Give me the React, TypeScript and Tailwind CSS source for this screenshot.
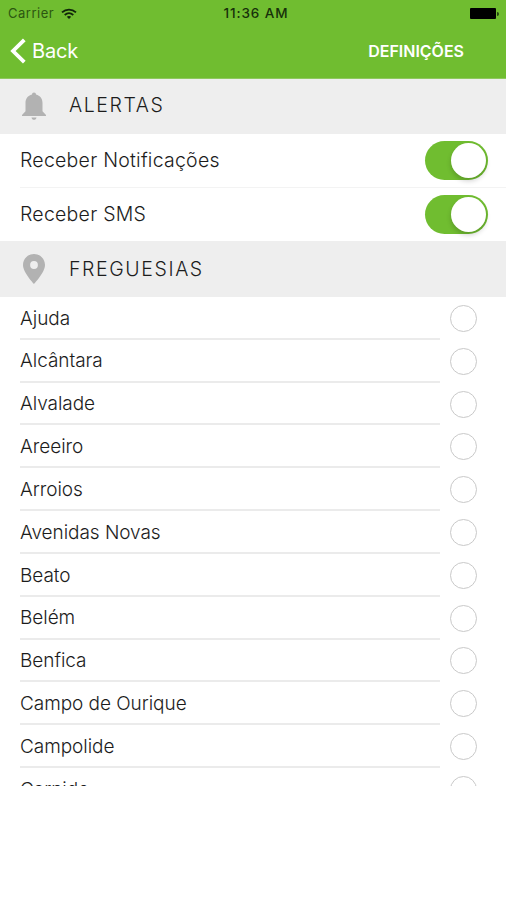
import { useState, type ReactNode } from "react";
import clsx from "clsx";

const PARISHES = [
  "Ajuda",
  "Alcântara",
  "Alvalade",
  "Areeiro",
  "Arroios",
  "Avenidas Novas",
  "Beato",
  "Belém",
  "Benfica",
  "Campo de Ourique",
  "Campolide",
  "Carnide",
];

export default function App() {
  const [notifications, setNotifications] = useState(true);
  const [sms, setSms] = useState(true);
  const [selected, setSelected] = useState<string[]>([]);

  const toggleParish = (name: string) => {
    setSelected((prev) =>
      prev.includes(name) ? prev.filter((item) => item !== name) : [...prev, name],
    );
  };

  return (
    <div className="h-[900px] w-[506px] overflow-hidden bg-white font-['Inter',sans-serif] text-[#1c1c1c]">
      <div className="flex h-[785.5px] flex-col overflow-hidden">
        <header className="h-[79px] shrink-0 border-b border-[#8fc85e] bg-[#70bd30]">
          <StatusBar />
          <div className="flex h-[48px] items-center justify-between pr-[42px] pl-[10px]">
            <button type="button" className="flex items-center gap-[6px] text-white">
              <BackIcon />
              <span className="text-[20px] leading-6 tracking-[-0.2px]">Back</span>
            </button>
            <h1 className="text-[16px] leading-5 font-semibold text-white">DEFINIÇÕES</h1>
          </div>
        </header>

        <SectionHeader icon={<BellIcon />} title="ALERTAS" className="h-[55px] pb-[2px]" />
        <SwitchRow
          label="Receber Notificações"
          checked={notifications}
          onChange={setNotifications}
          className="h-[53px]"
        />
        <div className="ml-5 h-0 shrink-0 border-t border-[#f3f3f3]" />
        <SwitchRow
          label="Receber SMS"
          checked={sms}
          onChange={setSms}
          className="h-[53px]"
        />
        <SectionHeader icon={<PinIcon />} title="FREGUESIAS" className="h-[56px]" />

        <ul className="shrink-0">
          {PARISHES.map((name) => (
            <ParishRow
              key={name}
              name={name}
              checked={selected.includes(name)}
              onToggle={() => toggleParish(name)}
            />
          ))}
        </ul>
      </div>
    </div>
  );
}

function StatusBar() {
  return (
    <div className="grid h-[27px] grid-cols-3 items-center pr-[7px] pl-2 text-[13px] text-[#17300a]">
      <div className="flex items-center gap-[7px]">
        <span className="tracking-[0.5px] text-[#2c5610]">Carrier</span>
        <WifiIcon />
      </div>
      <span className="pl-[5px] text-center text-[13.5px] font-medium tracking-[0.9px] whitespace-nowrap">
        11:36 AM
      </span>
      <div className="flex items-center justify-end gap-px">
        <span className="h-[11px] w-[26px] rounded-[1px] bg-black" />
        <span className="h-1 w-[2px] rounded-r-full bg-[#234510]" />
      </div>
    </div>
  );
}

function SectionHeader({
  icon,
  title,
  className,
}: {
  icon: ReactNode;
  title: string;
  className?: string;
}) {
  return (
    <div className={clsx("flex shrink-0 items-center bg-[#eeeeee] pl-[21px]", className)}>
      <span className="flex w-[26px] justify-center">{icon}</span>
      <h2 className="ml-[22px] pt-px text-[19.5px] font-[350] tracking-[1.6px]">{title}</h2>
    </div>
  );
}

function SwitchRow({
  label,
  checked,
  onChange,
  className,
}: {
  label: string;
  checked: boolean;
  onChange: (value: boolean) => void;
  className?: string;
}) {
  return (
    <div className={clsx("flex shrink-0 items-center justify-between pr-[18px] pl-5", className)}>
      <span className="text-[19.5px] font-[350] tracking-[0.25px]">{label}</span>
      <button
        type="button"
        role="switch"
        aria-checked={checked}
        aria-label={label}
        onClick={() => onChange(!checked)}
        className={clsx(
          "flex h-[39px] w-[63px] items-center rounded-full p-[2px]",
          checked ? "justify-end bg-[#70bd30]" : "justify-start bg-[#dddddd]",
        )}
      >
        <span className="size-[35px] rounded-full bg-white shadow-[0_3px_5px_rgba(0,0,0,0.18)]" />
      </button>
    </div>
  );
}

function ParishRow({
  name,
  checked,
  onToggle,
}: {
  name: string;
  checked: boolean;
  onToggle: () => void;
}) {
  return (
    <li className="flex h-[42.82px] items-center pl-5">
      <div className="flex h-full w-[420px] items-center border-b-2 border-[#ebebeb] pt-[3px]">
        <span className="text-[19px] font-[350] tracking-[-0.05px]">{name}</span>
      </div>
      <button
        type="button"
        role="checkbox"
        aria-checked={checked}
        aria-label={name}
        onClick={onToggle}
        className={clsx(
          "ml-[10px] size-[27px] rounded-full border-[1.5px] border-[#c9c9c9]",
          checked && "bg-[#70bd30]",
        )}
      />
    </li>
  );
}

function BackIcon() {
  return (
    <svg viewBox="0 0 16 26" className="h-[26px] w-4" fill="none" stroke="white" strokeWidth="3.8">
      <path d="M14.3 1.8 L3 13 L14.3 24.2" />
    </svg>
  );
}

function WifiIcon() {
  return (
    <svg viewBox="0 0 16 12" className="h-3 w-4" fill="none" stroke="#10250a" strokeWidth="1.8">
      <path d="M1 4.4 C5 0.7 11 0.7 15 4.4" />
      <path d="M3.7 7 C6.3 4.7 9.7 4.7 12.3 7" />
      <path d="M5.8 8.8 C7 7.8 9 7.8 10.2 8.8 L8 11 Z" fill="#10250a" stroke="none" />
    </svg>
  );
}

function BellIcon() {
  return (
    <svg viewBox="0 0 24 28" className="h-7 w-6" fill="#b2b2b2">
      <path d="M12 0.5 C13.2 0.5 14 1.3 14 2.4 C18.2 3.4 20.5 6.6 20.5 11 V19.2 L24 23 V24 H0 V23 L3.5 19.2 V11 C3.5 6.6 5.8 3.4 10 2.4 C10 1.3 10.8 0.5 12 0.5 Z" />
      <path d="M9.5 25.5 H14.5 C14.2 27 13.3 27.8 12 27.8 C10.7 27.8 9.8 27 9.5 25.5 Z" />
    </svg>
  );
}

function PinIcon() {
  return (
    <svg viewBox="0 0 22 30" className="h-[30px] w-[22px]" fill="#b2b2b2">
      <path
        fillRule="evenodd"
        d="M11 0 C4.9 0 0 4.9 0 11 C0 18.5 11 30 11 30 C11 30 22 18.5 22 11 C22 4.9 17.1 0 11 0 Z M11 7.1 A3.9 3.9 0 1 1 11 14.9 A3.9 3.9 0 1 1 11 7.1 Z"
      />
    </svg>
  );
}
